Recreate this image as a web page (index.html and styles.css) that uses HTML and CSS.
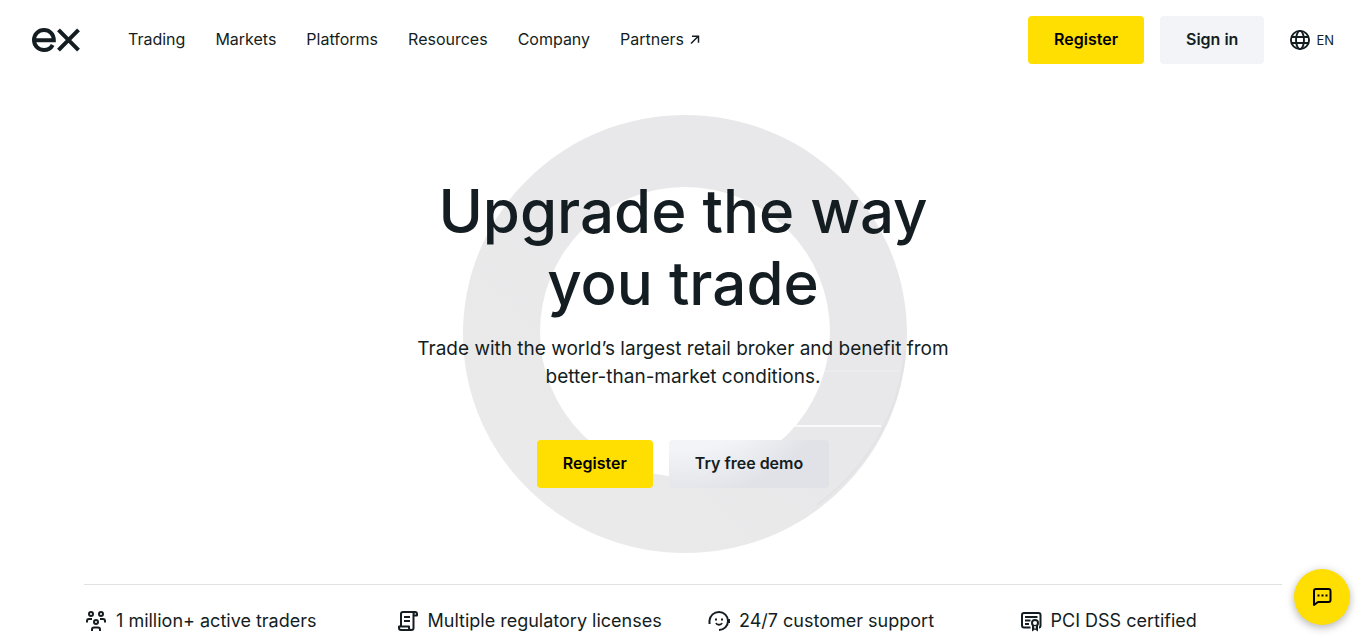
FILE: index.html
```html
<!DOCTYPE html>
<html lang="en">
<head>
<meta charset="utf-8">
<meta name="viewport" content="width=device-width, initial-scale=1">
<title>Upgrade the way you trade</title>
<link rel="stylesheet" href="styles.css">
</head>
<body>
<header class="header">
  <a class="logo" href="#" aria-label="Home">
    <svg width="48" height="24" viewBox="0 0 48 24" fill="none" stroke="currentColor" stroke-width="4">
      <path d="M2.300 12.200H21.800C21.800 6.200 17.600 2 12 2S2 6.400 2 12s4.400 10 10 10c3.900 0 7-1.900 8.700-5"/>
      <path d="M26.500 1.800 46.500 22.200M46.500 1.800 26.500 22.200"/>
    </svg>
  </a>
  <nav class="nav">
    <a href="#">Trading</a>
    <a href="#">Markets</a>
    <a href="#">Platforms</a>
    <a href="#">Resources</a>
    <a href="#">Company</a>
    <a class="nav-external" href="#">Partners
      <svg width="12" height="12" viewBox="0 0 12 12" fill="none" stroke="currentColor" stroke-width="1.500"><path d="M2 10.500 9 3.500M3 3.200h6.500v6.500"/></svg>
    </a>
  </nav>
  <div class="actions">
    <button class="btn btn-primary" type="button">Register</button>
    <button class="btn btn-secondary" type="button">Sign in</button>
  </div>
  <button class="language" type="button">
    <svg width="24" height="24" viewBox="0 0 24 24" fill="none" stroke="currentColor" stroke-width="1.900"><circle cx="12" cy="12" r="9.100"/><ellipse cx="12" cy="12" rx="4" ry="9.100"/><path d="M3.500 9h17M3.500 15h17"/></svg>
    EN
  </button>
</header>
<main>
  <section class="hero">
    <svg class="ring" width="444" height="438" viewBox="0 0 444 438">
      <defs>
        <linearGradient id="shade" x1="0" y1="1" x2="1" y2="0"><stop offset="0" stop-color="#ebebeb"/><stop offset=".6" stop-color="#e8e8ea"/></linearGradient>
      </defs>
      <path fill="url(#shade)" fill-rule="evenodd" d="M222 0C344.600 0 444 98 444 219S344.600 438 222 438 0 340 0 219 99.400 0 222 0ZM222 72a145 145 0 1 0 0 290 145 145 0 1 0 0-290Z"/>
      <path d="M442 235c-5 62-37 118-88 155" fill="none" stroke="#e3e3e5" stroke-width="2"/>
      <path d="M362 256h74" stroke="#efeff0" stroke-width="1"/>
      <path d="M332 311h86" stroke="#fafafa" stroke-width="2"/>
    </svg>
    <h1 class="title">Upgrade the way<br>you trade</h1>
    <p class="lead">Trade with the world’s largest retail broker and benefit from better-than-market conditions.</p>
    <div class="hero-actions">
      <button class="btn btn-primary" type="button">Register</button>
      <button class="btn btn-demo" type="button">Try free demo</button>
    </div>
  </section>
  <ul class="features">
    <li>
      <svg width="24" height="24" viewBox="0 0 24 24" fill="none" stroke="currentColor" stroke-width="2"><circle cx="7" cy="5" r="2"/><circle cx="17" cy="5" r="2"/><circle cx="12" cy="13" r="2"/><path d="M3 13.500V12c0-1.500.8-2 2-2h3M21 13.500V12c0-1.500-.8-2-2-2h-3M8 22v-1.500c0-1.500.8-2 2-2h4c1.200 0 2 .5 2 2V22"/></svg>
      1 million+ active traders
    </li>
    <li>
      <svg width="24" height="24" viewBox="0 0 24 24" fill="none" stroke="currentColor" stroke-width="2" stroke-linejoin="round"><path d="M5 17V5c0-1.500 1-2 2-2h12.500C18 3 17.500 4 17.500 5v14c0 1.500-1 2-2 2H5c-1.500 0-2-1-2-2v-1.500h10V19c0 1 .5 2 2 2M19 3c1.500 0 2 1 2 2v1.500h-3.500M8 8h6M8 12h6"/></svg>
      Multiple regulatory licenses
    </li>
    <li>
      <svg width="24" height="24" viewBox="0 0 24 24" fill="none" stroke="currentColor" stroke-width="2"><path d="M2.500 15v-3.500C3 6.500 7 3 12 3s9 4 9 9-4 9-9 9M22 10v4"/><path d="M9 14c1 2.300 5 2.300 6 0" stroke-width="1.800"/><path d="M8 10.500h2M14 10.500h2" stroke-width="1.800"/></svg>
      24/7 customer support
    </li>
    <li>
      <svg width="24" height="24" viewBox="0 0 24 24" fill="none" stroke="currentColor" stroke-width="2"><path d="M11.500 18.500H5c-1.500 0-2-.5-2-2V6c0-1.500.5-2 2-2h14.500c1.500 0 2 .5 2 2v10.500c0 1.200-.4 2-1.500 2M6 8h12.500M6 11.500h5.500M6 15h4"/><circle cx="16" cy="14" r="3"/><path d="M13 16h6v6.500l-3-2-3 2Z" fill="currentColor" stroke="none"/><path d="M16 17v2.500" stroke="#fff" stroke-width="1.500"/></svg>
      PCI DSS certified
    </li>
  </ul>
</main>
<button class="chat" type="button" aria-label="Open chat">
  <svg width="24" height="24" viewBox="0 0 24 24" fill="none" stroke="currentColor" stroke-width="2"><path d="M4 20V6c0-1.500.5-2 2-2h12.500C20 4 20.500 4.500 20.500 6v9c0 1.500-.5 2-2 2H8Z" stroke-linejoin="round"/><path d="M7.500 10.500h2M11.500 10.500h2M15.500 10.500h2"/></svg>
</button>
</body>
</html>
```
FILE: styles.css
```css
* { box-sizing: border-box; }
body {
  margin: 0;
  background: #fff;
  color: #141d22;
  font-family: Inter, "Liberation Sans", sans-serif;
  overflow-x: hidden;
}
svg { display: block; flex: none; }
a { color: inherit; text-decoration: none; }
button { font: inherit; color: inherit; border: 0; cursor: pointer; }

.header {
  display: flex;
  align-items: center;
  padding: 16px 32px;
}
.nav {
  display: flex;
  gap: 30px;
  margin-left: 48px;
  padding-bottom: 2px;
  font-size: 16px;
  line-height: 24px;
}
.nav-external { display: flex; align-items: center; gap: 5px; }
.actions { display: flex; gap: 16px; margin-left: auto; }
.btn {
  height: 48px;
  padding: 0 26px 2px;
  border-radius: 4px;
  font-size: 16px;
  font-weight: 600;
  white-space: nowrap;
}
.btn-primary { background: #ffde02; color: #000; }
.btn-secondary { background: #f3f4f7; }
.btn-demo {
  background: radial-gradient(circle at 15px -106px, #f3f4f7 115px, #e1e2e7 165px);
}
.language {
  display: flex;
  align-items: center;
  gap: 4px;
  margin-left: 24px;
  padding: 0;
  background: none;
  font-size: 13px;
}

.hero {
  position: relative;
  display: flex;
  flex-direction: column;
  align-items: center;
  padding: 95px 32px 96px;
  text-align: center;
}
.ring {
  position: absolute;
  top: 35px;
  left: 50%;
  margin-left: -220px;
  z-index: -1;
}
.title {
  margin: 0;
  font-size: 60px;
  font-weight: 500;
  line-height: 72px;
}
.lead {
  max-width: 560px;
  margin: 16px 0 0;
  font-size: 19px;
  line-height: 28px;
}
.hero-actions { display: flex; gap: 16px; margin-top: 49px; }

.features {
  display: grid;
  grid-template-columns: repeat(4, minmax(0, 1fr));
  gap: 48px;
  margin: 0 84px;
  padding: 22px 0 8px;
  border-top: 1px solid #e0e1e2;
  list-style: none;
  font-size: 18px;
  line-height: 28px;
}
.features li {
  display: flex;
  align-items: center;
  gap: 8px;
  white-space: nowrap;
}

.chat {
  position: fixed;
  right: 16px;
  bottom: 16px;
  display: grid;
  place-items: center;
  width: 56px;
  height: 56px;
  padding: 0;
  border-radius: 50%;
  background: #ffde02;
  color: #000;
  box-shadow: 0 3px 8px rgba(0, 0, 0, .25), 0 0 12px rgba(0, 0, 0, .06);
}
```
